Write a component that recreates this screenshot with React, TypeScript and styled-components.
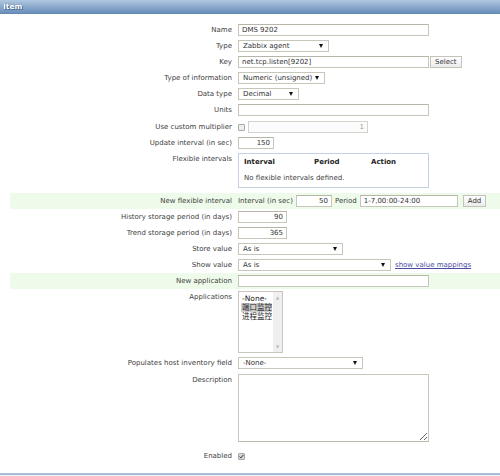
import React from "react";
import styled, { createGlobalStyle } from "styled-components";

const GlobalStyle = createGlobalStyle`
  html, body {
    margin: 0;
    padding: 0;
    background: #ffffff;
  }
  body {
    font-family: "DejaVu Sans", Verdana, sans-serif;
    font-size: 7px;
    color: #404040;
  }
`;

const Page = styled.div`
  width: 500px;
  height: 476px;
  overflow: hidden;
`;

const Header = styled.div`
  height: 13px;
  padding-left: 3px;
  display: flex;
  align-items: center;
  background: linear-gradient(#b0c7e0, #6a8fba);
  border-bottom: 1px solid #6487b3;
  color: #ffffff;
  font-weight: bold;
  font-size: 7.5px;
  text-shadow: 0 0 1px #34557e, 1px 1px 0 #4d6f99;
`;

const Form = styled.div`
  padding: 8px 0 0 10px;
  display: flex;
  flex-direction: column;
`;

const Row = styled.div<{ $green?: boolean; $pad?: string }>`
  display: grid;
  grid-template-columns: 222px 1fr;
  column-gap: 6px;
  min-height: 12px;
  padding: ${({ $pad }) => $pad || "2px 0"};
  background: ${({ $green }) => ($green ? "#eefbea" : "transparent")};
`;

const Label = styled.div`
  text-align: right;
  line-height: 12px;
  white-space: nowrap;
`;

const Field = styled.div`
  display: flex;
  align-items: center;
  gap: 3px;
  min-width: 0;
`;

const TextInput = styled.input<{ $w: number; $right?: boolean }>`
  box-sizing: border-box;
  width: ${({ $w }) => $w}px;
  height: 12px;
  margin: 0;
  padding: 0 3px;
  border: 1px solid #c6c6ba;
  border-top-color: #b5b5a9;
  background: #ffffff;
  font-family: "DejaVu Sans", Verdana, sans-serif;
  font-size: 7px;
  color: #333333;
  text-align: ${({ $right }) => ($right ? "right" : "left")};
  outline: none;
  &:disabled {
    background: #fcfcfc;
    color: #9a9a9a;
    border-color: #d4d4cc;
  }
`;

const SelectBox = styled.div<{ $w: number }>`
  box-sizing: border-box;
  width: ${({ $w }) => $w}px;
  height: 12px;
  padding: 0 3px 0 4px;
  display: flex;
  align-items: center;
  justify-content: space-between;
  border: 1px solid #c6c6ba;
  background: #ffffff;
  color: #333333;
  white-space: nowrap;
`;

const Arrow = styled.span`
  flex: none;
  width: 0;
  height: 0;
  border-left: 2px solid transparent;
  border-right: 2px solid transparent;
  border-top: 4px solid #111111;
  margin-left: 3px;
  margin-right: 2px;
`;

const Button = styled.button<{ $shift?: number }>`
  box-sizing: border-box;
  height: 12px;
  margin: 0 0 0 ${({ $shift }) => $shift || 0}px;
  padding: 0 4px;
  border: 1px solid #c3c3b7;
  background: linear-gradient(#ffffff, #ececec);
  font-family: "DejaVu Sans", Verdana, sans-serif;
  font-size: 7px;
  color: #333333;
`;

const Check = styled.span<{ $on?: boolean }>`
  box-sizing: border-box;
  width: 7px;
  height: 7px;
  border: 1px solid #a9a9a9;
  border-radius: 1px;
  background: ${({ $on }) => ($on ? "#d6d6d6" : "#eeeeee")};
  display: inline-flex;
  align-items: center;
  justify-content: center;
`;

const Inline = styled.span`
  white-space: nowrap;
  line-height: 12px;
`;

const Link = styled.a`
  color: #4b4ba3;
  text-decoration: underline;
  white-space: nowrap;
  margin-left: 1px;
`;

const FlexBox = styled.div`
  box-sizing: border-box;
  width: 191px;
  height: 35px;
  border: 1px solid #c5d0e6;
  padding: 4px 5px;
  display: flex;
  flex-direction: column;
  gap: 8px;
`;

const FlexHead = styled.div`
  display: grid;
  grid-template-columns: 70px 57px 1fr;
  font-weight: bold;
  color: #222222;
`;

const ListBox = styled.div`
  box-sizing: border-box;
  width: 45px;
  height: 62px;
  border: 1px solid #c6c6ba;
  display: grid;
  grid-template-columns: 1fr 9px;
  background: #ffffff;
`;

const ListItems = styled.div`
  padding: 2px 1px 0 2px;
  display: flex;
  flex-direction: column;
  font-family: "DejaVu Sans", "Noto Sans CJK SC", sans-serif;
  font-size: 7.5px;
  color: #222222;
`;

const ListItem = styled.div<{ $sel?: boolean }>`
  line-height: 9px;
  padding-left: 1px;
  background: ${({ $sel }) => ($sel ? "#cfcfcf" : "transparent")};
  white-space: nowrap;
`;

const ScrollBar = styled.div`
  background: #efefef;
  display: flex;
  flex-direction: column;
  justify-content: space-between;
  align-items: center;
  padding: 3px 0;
  color: #b5b5b5;
  font-size: 4px;
`;

const TextArea = styled.textarea`
  box-sizing: border-box;
  width: 191px;
  height: 68px;
  margin: 0;
  border: 1px solid #c6c6ba;
  border-bottom-color: #b9b9ad;
  outline: none;
  font-family: "DejaVu Sans", Verdana, sans-serif;
  font-size: 7px;
`;

const Footer = styled.div`
  margin-top: 9px;
  height: 3px;
  border-top: 2px solid #a8bbd2;
  background: #eef2f7;
`;

const Select: React.FC<{ w: number; text: string }> = ({ w, text }) => (
  <SelectBox $w={w}>
    <span>{text}</span>
    <Arrow />
  </SelectBox>
);

const App: React.FC = () => (
  <Page>
    <GlobalStyle />
    <Header>Item</Header>
    <Form>
      <Row>
        <Label>Name</Label>
        <Field>
          <TextInput $w={191} defaultValue="DMS 9202" />
        </Field>
      </Row>
      <Row>
        <Label>Type</Label>
        <Field>
          <Select w={91} text="Zabbix agent" />
        </Field>
      </Row>
      <Row>
        <Label>Key</Label>
        <Field>
          <TextInput $w={191} defaultValue="net.tcp.listen[9202]" />
          <Button $shift={-2}>Select</Button>
        </Field>
      </Row>
      <Row>
        <Label>Type of information</Label>
        <Field>
          <Select w={87} text="Numeric (unsigned)" />
        </Field>
      </Row>
      <Row>
        <Label>Data type</Label>
        <Field>
          <Select w={61} text="Decimal" />
        </Field>
      </Row>
      <Row>
        <Label>Units</Label>
        <Field>
          <TextInput $w={191} />
        </Field>
      </Row>
      <Row $pad="3px 0 2px">
        <Label>Use custom multiplier</Label>
        <Field>
          <Check />
          <TextInput $w={120} $right disabled defaultValue="1" />
        </Field>
      </Row>
      <Row>
        <Label>Update interval (in sec)</Label>
        <Field>
          <TextInput $w={36} $right defaultValue="150" />
        </Field>
      </Row>
      <Row $pad="2px 0 5px">
        <Label>Flexible intervals</Label>
        <Field>
          <FlexBox>
            <FlexHead>
              <span>Interval</span>
              <span>Period</span>
              <span>Action</span>
            </FlexHead>
            <span>No flexible intervals defined.</span>
          </FlexBox>
        </Field>
      </Row>
      <Row $green>
        <Label>New flexible interval</Label>
        <Field>
          <Inline>Interval (in sec)</Inline>
          <TextInput $w={36} $right defaultValue="50" />
          <Inline>Period</Inline>
          <TextInput $w={98} defaultValue="1-7,00:00-24:00" />
          <Button $shift={2}>Add</Button>
        </Field>
      </Row>
      <Row>
        <Label>History storage period (in days)</Label>
        <Field>
          <TextInput $w={49} $right defaultValue="90" />
        </Field>
      </Row>
      <Row>
        <Label>Trend storage period (in days)</Label>
        <Field>
          <TextInput $w={49} $right defaultValue="365" />
        </Field>
      </Row>
      <Row>
        <Label>Store value</Label>
        <Field>
          <Select w={105} text="As is" />
        </Field>
      </Row>
      <Row>
        <Label>Show value</Label>
        <Field>
          <Select w={153} text="As is" />
          <Link>show value mappings</Link>
        </Field>
      </Row>
      <Row $green>
        <Label>New application</Label>
        <Field>
          <TextInput $w={191} />
        </Field>
      </Row>
      <Row>
        <Label>Applications</Label>
        <Field>
          <ListBox>
            <ListItems>
              <ListItem>-None-</ListItem>
              <ListItem $sel>端口监控</ListItem>
              <ListItem>进程监控</ListItem>
            </ListItems>
            <ScrollBar>
              <span>▲</span>
              <span>▼</span>
            </ScrollBar>
          </ListBox>
        </Field>
      </Row>
      <Row>
        <Label>Populates host inventory field</Label>
        <Field>
          <Select w={125} text="-None-" />
        </Field>
      </Row>
      <Row $pad="3px 0 6px">
        <Label>Description</Label>
        <Field>
          <TextArea />
        </Field>
      </Row>
      <Row>
        <Label>Enabled</Label>
        <Field>
          <Check $on>
            <svg width="5" height="5" viewBox="0 0 5 5">
              <path d="M0.6 2.6 L1.9 3.9 L4.4 0.9" stroke="#333" strokeWidth="1" fill="none" />
            </svg>
          </Check>
        </Field>
      </Row>
    </Form>
    <Footer />
  </Page>
);

export default App;
